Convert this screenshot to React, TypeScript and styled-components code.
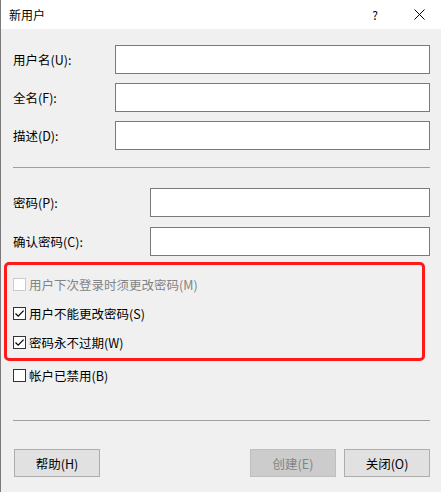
import styled, { createGlobalStyle } from "styled-components";

const GlobalStyle = createGlobalStyle`
  html, body {
    margin: 0;
    padding: 0;
    background: #f0f0f0;
  }
  body {
    font-family: "Noto Sans CJK SC", "Liberation Sans", sans-serif;
    font-size: 12px;
    color: #000;
  }
`;

const Window = styled.div`
  width: 441px;
  height: 492px;
  box-sizing: border-box;
  border-left: 1px solid #7a7a7a;
  background: #f0f0f0;
  display: flex;
  flex-direction: column;
`;

const TitleBar = styled.div`
  height: 29px;
  background: #fff;
  display: flex;
  align-items: center;
  padding-left: 8px;
`;

const Title = styled.div`
  flex: 1;
  font-size: 12px;
`;

const TitleButton = styled.div`
  width: 44px;
  height: 29px;
  display: flex;
  align-items: center;
  justify-content: center;
  font-size: 12px;
`;

const Body = styled.div`
  flex: 1;
  display: flex;
  flex-direction: column;
  padding: 16px 11px 0 12px;
`;

const FieldGroup = styled.div<{ $gap: number }>`
  display: flex;
  flex-direction: column;
  gap: ${({ $gap }) => $gap}px;
`;

const FieldRow = styled.div<{ $labelWidth: number }>`
  display: grid;
  grid-template-columns: ${({ $labelWidth }) => $labelWidth}px 1fr;
  align-items: center;
  height: 29px;
`;

const Label = styled.label`
  white-space: nowrap;
  font-size: 12.5px;
`;

const TextBox = styled.input`
  box-sizing: border-box;
  height: 29px;
  width: 100%;
  border: 1px solid #7a7a7a;
  background: #fff;
  margin: 0;
  outline: none;
  font: inherit;
`;

const Separator = styled.hr<{ $top: number; $bottom: number }>`
  border: none;
  border-top: 1px solid #a0a0a0;
  margin: ${({ $top }) => $top}px 0 ${({ $bottom }) => $bottom}px;
  height: 0;
`;

const Highlight = styled.div`
  margin: 6px 5px 0 -9px;
  border: 3px solid #ff1a1a;
  border-radius: 5px;
  padding: 5px 0 1px 6px;
  display: flex;
  flex-direction: column;
`;

const CheckRow = styled.label<{ $disabled?: boolean }>`
  display: flex;
  align-items: center;
  height: 29px;
  gap: 3px;
  font-size: 12.5px;
  color: ${({ $disabled }) => ($disabled ? "#838383" : "#000")};
`;

const Box = styled.span<{ $disabled?: boolean }>`
  width: 13px;
  height: 13px;
  box-sizing: border-box;
  border: 1px solid ${({ $disabled }) => ($disabled ? "#cccccc" : "#333")};
  background: #fff;
  display: flex;
  align-items: center;
  justify-content: center;
  flex-shrink: 0;
`;

const PlainChecks = styled.div`
  display: flex;
  flex-direction: column;
`;

const ButtonBar = styled.div`
  display: flex;
  gap: 8px;
  padding-left: 1px;
`;

const Button = styled.button`
  width: 86px;
  height: 28px;
  border: 1px solid #adadad;
  background: #e1e1e1;
  font: inherit;
  font-size: 12.5px;
  color: #000;
  padding: 0;
  margin: 0;

  &:disabled {
    background: #cccccc;
    border-color: #bfbfbf;
    color: #838383;
  }
`;

const Spacer = styled.div`
  flex: 1;
`;

function CheckBox({
  label,
  checked,
  disabled,
}: {
  label: string;
  checked?: boolean;
  disabled?: boolean;
}) {
  return (
    <CheckRow $disabled={disabled}>
      <Box $disabled={disabled}>
        {checked && (
          <svg width="11" height="11" viewBox="0 0 11 11">
            <path d="M1.5 5.5 L4.2 8.2 L9.6 2.6" fill="none" stroke="#000" strokeWidth="1.2" />
          </svg>
        )}
      </Box>
      {label}
    </CheckRow>
  );
}

function App() {
  return (
    <>
      <GlobalStyle />
      <Window>
        <TitleBar>
          <Title>新用户</Title>
          <TitleButton>?</TitleButton>
          <TitleButton>
            <svg width="11" height="11" viewBox="0 0 11 11">
              <path d="M0.5 0.5 L10.5 10.5 M10.5 0.5 L0.5 10.5" stroke="#000" strokeWidth="1" />
            </svg>
          </TitleButton>
        </TitleBar>
        <Body>
          <FieldGroup $gap={9}>
            <FieldRow $labelWidth={102}>
              <Label>用户名(U):</Label>
              <TextBox />
            </FieldRow>
            <FieldRow $labelWidth={102}>
              <Label>全名(F):</Label>
              <TextBox />
            </FieldRow>
            <FieldRow $labelWidth={102}>
              <Label>描述(D):</Label>
              <TextBox />
            </FieldRow>
          </FieldGroup>
          <Separator $top={17} $bottom={20} />
          <FieldGroup $gap={10}>
            <FieldRow $labelWidth={137}>
              <Label>密码(P):</Label>
              <TextBox type="password" />
            </FieldRow>
            <FieldRow $labelWidth={137}>
              <Label>确认密码(C):</Label>
              <TextBox type="password" />
            </FieldRow>
          </FieldGroup>
          <Highlight>
            <CheckBox label="用户下次登录时须更改密码(M)" disabled />
            <CheckBox label="用户不能更改密码(S)" checked />
            <CheckBox label="密码永不过期(W)" checked />
          </Highlight>
          <PlainChecks>
            <CheckBox label="帐户已禁用(B)" />
          </PlainChecks>
          <Separator $top={30} $bottom={28} />
          <ButtonBar>
            <Button>帮助(H)</Button>
            <Spacer />
            <Button disabled>创建(E)</Button>
            <Button>关闭(O)</Button>
          </ButtonBar>
        </Body>
      </Window>
    </>
  );
}

export default App;
